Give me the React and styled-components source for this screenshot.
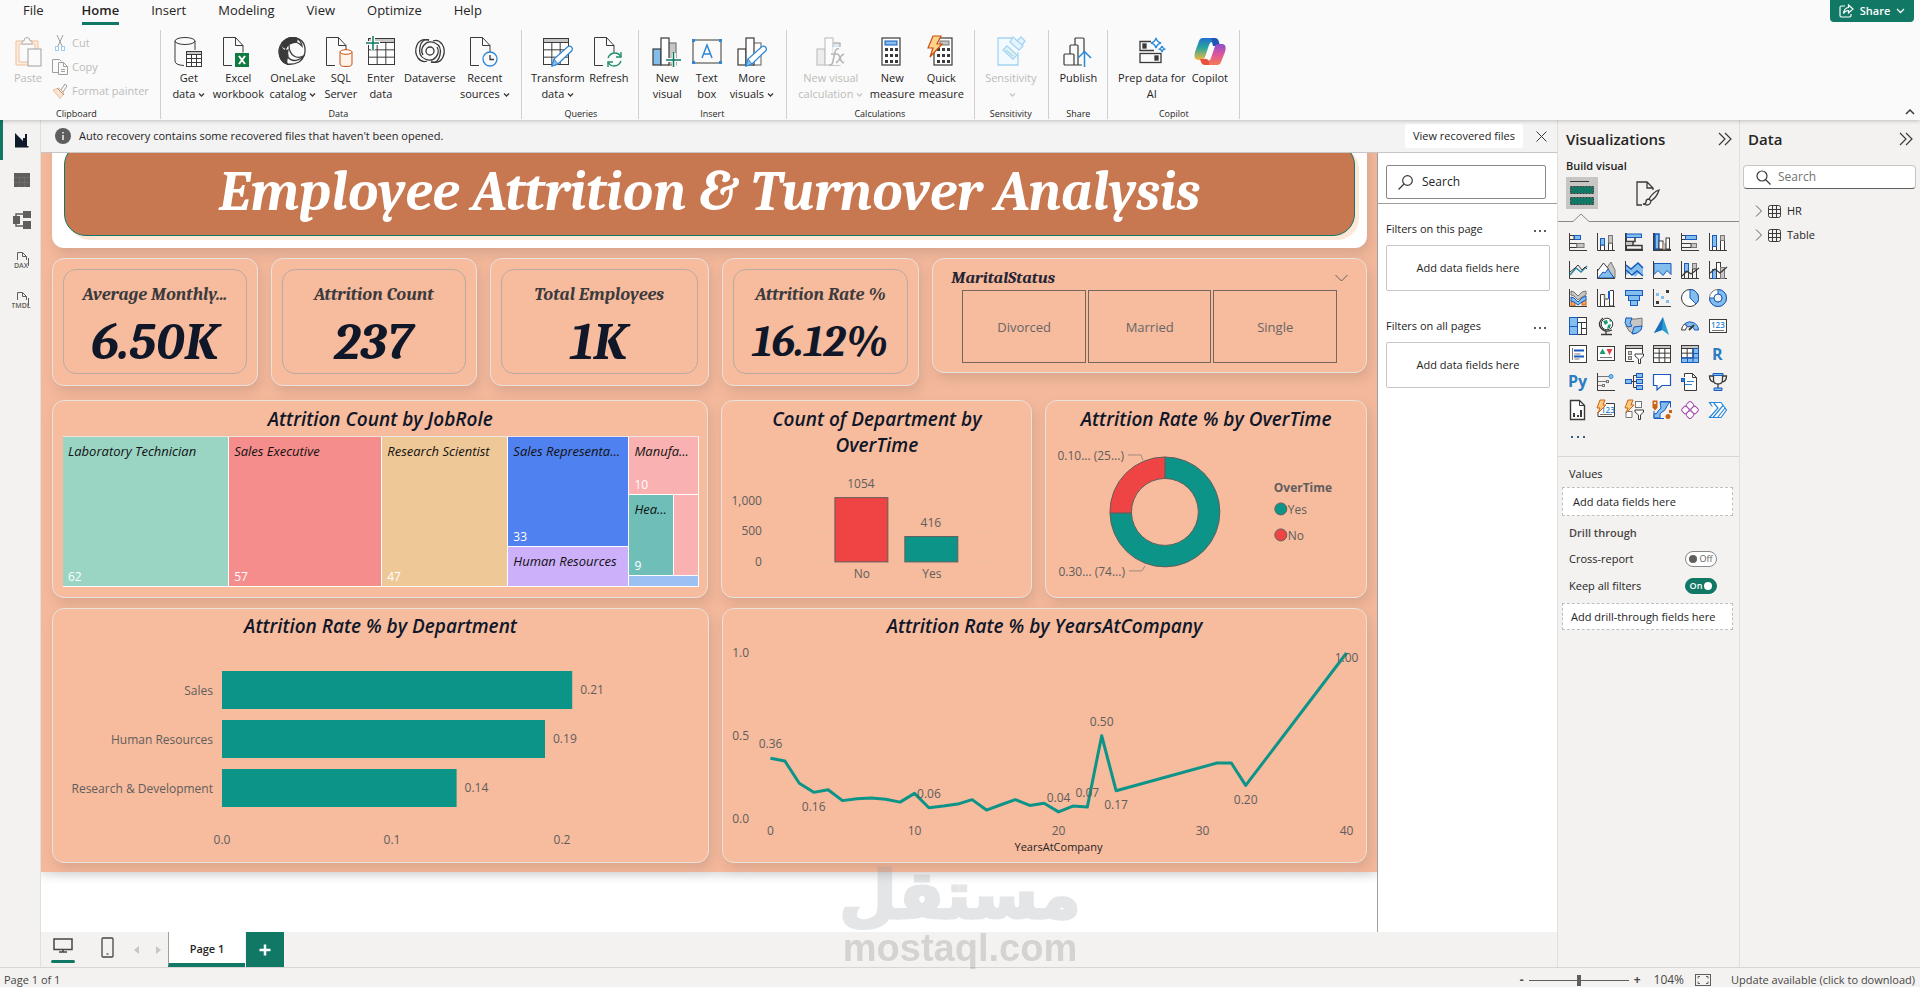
import React, { useState } from 'react';
import styled, { createGlobalStyle } from 'styled-components';

const GlobalStyle = createGlobalStyle`
  * { box-sizing: border-box; }
  body {
    margin: 0;
    background: #f3f2f1;
    color: #252423;
    font-family: "Segoe UI", "Open Sans", "Noto Sans", sans-serif;
    font-size: 11px;
    line-height: 16px;
  }
  button, input { font: inherit; color: inherit; }
  button { background: none; border: 0; padding: 0; cursor: pointer; }
  svg { display: block; flex: none; }
`;

const K = '#3b3a39';
const B = '#185abd';
const F = '#83beec';
const G = '#c8c6c4';
const S = '#797775';
const GREEN = '#117865';
const TEAL = '#0d9488';
const serif = '"Cambria", "Caladea", "Noto Serif", serif';

/* ---------- shell ---------- */

const Shell = styled.div`
  display: flex;
  flex-direction: column;
  height: 100vh;
  overflow: hidden;
`;

const Ribbon = styled.header`
  position: relative;
  z-index: 2;
  flex: none;
  background: #fafafa;
  box-shadow: 0 1px 4px rgba(0, 0, 0, 0.22);
`;

const TabBar = styled.nav`
  display: flex;
  align-items: flex-start;
  gap: 32px;
  height: 26px;
  padding-left: 23px;
`;

const Tab = styled.button`
  height: 25px;
  padding-bottom: 5px;
  margin-right: ${props => props.$wide ? '6px' : '0'};
  border-bottom: 3px solid ${props => props.$active ? GREEN : 'transparent'};
  font-size: 13px;
  font-weight: ${props => props.$active ? 600 : 400};
  line-height: 20px;
`;

const ShareButton = styled.button`
  display: flex;
  align-items: center;
  justify-content: center;
  gap: 6px;
  width: 84px;
  height: 22px;
  margin: 0 6px 0 auto;
  border-radius: 0 0 4px 4px;
  background: ${GREEN};
  color: #fff;
  font-size: 11px;
  font-weight: 600;
`;

const Groups = styled.div`
  display: flex;
  padding: 4px 0 1px;
`;

const Group = styled.section`
  display: flex;
  flex-direction: column;
  padding: 0 ${props => props.$right || 6}px 0 ${props => props.$left || 8}px;
  border-right: 1px solid #d2d0ce;
`;

const GroupItems = styled.div`
  display: flex;
  height: 78px;
`;

const GroupLabel = styled.div`
  font-size: 9px;
  line-height: 11px;
  text-align: center;
`;

const RibbonItem = styled.button`
  display: flex;
  flex-direction: column;
  align-items: center;
  gap: 3px;
  width: ${props => props.$width}px;
  padding-top: 7px;
  white-space: nowrap;
  color: ${props => props.disabled ? '#bdbbb9' : '#252423'};
  svg.caret { display: inline-block; margin-left: 3px; }
`;

const ClipColumn = styled.div`
  display: flex;
  flex-direction: column;
  padding-top: 1px;
`;

const ClipItem = styled.button`
  display: flex;
  align-items: center;
  gap: 4px;
  height: 24px;
  color: #bdbbb9;
`;

const Collapse = styled.button`
  margin: auto 5px 4px auto;
`;

const Body = styled.div`
  display: flex;
  flex: 1;
  min-height: 0;
`;

const Rail = styled.nav`
  display: flex;
  flex-direction: column;
  width: 41px;
  flex: none;
  border-right: 1px solid #e1dfdd;
`;

const RailButton = styled.button`
  display: flex;
  align-items: center;
  justify-content: center;
  height: 40px;
  border-left: 3px solid ${props => props.$active ? GREEN : 'transparent'};
`;

const Center = styled.main`
  display: flex;
  flex-direction: column;
  flex: 1;
  min-width: 0;
`;

const Notice = styled.div`
  display: flex;
  align-items: center;
  height: 33px;
  flex: none;
  padding: 0 5px 0 14px;
  gap: 8px;
  border-bottom: 1px solid #c8c6c4;
  background: #f3f3f3;
`;

const NoticeAction = styled.button`
  height: 24px;
  margin-left: auto;
  padding: 0 8px;
  border-radius: 3px;
  background: #fff;
`;

const CloseButton = styled.button`
  padding: 5px;
`;

const Workspace = styled.div`
  display: flex;
  flex: 1;
  min-height: 0;
  background: #fff;
`;

const Canvas = styled.div`
  flex: 1;
  min-width: 0;
  overflow: hidden;
`;

/* ---------- report page ---------- */

// the page is scrolled, so its top edge lies above the viewport
const ReportPage = styled.div`
  margin-top: -20px;
  padding: 0 10px 9px 11px;
  background: #f4b99c;
  box-shadow: 0 3px 10px rgba(0, 0, 0, 0.16);
`;

const TitleCard = styled.div`
  padding: 10px 12px 12px;
  border-radius: 12px;
  background: #fff;
  box-shadow: 3px 6px 12px rgba(120, 90, 80, 0.22);
`;

const ReportTitle = styled.h1`
  height: 93px;
  margin: 0;
  border: 1px solid ${GREEN};
  border-radius: 22px;
  background: #c87850;
  box-shadow: 4px 4px 1px #fbe8d6;
  color: #fff;
  font: italic 700 56px/96px ${serif};
  text-align: center;
`;

const CardRow = styled.div`
  display: grid;
  grid-template-columns: ${props => props.$columns};
  align-items: start;
  gap: 13px;
  margin-top: ${props => props.$top}px;
`;

const Card = styled.section`
  display: flex;
  flex-direction: column;
  height: ${props => props.$height}px;
  padding-top: ${props => props.$pad || 0}px;
  border: 1px solid #e8e2df;
  border-radius: 12px;
  background: #f7bb9e;
  box-shadow: 3px 6px 12px rgba(120, 90, 80, 0.2);
  min-width: 0;
`;

const Kpi = styled.div`
  flex: 1;
  display: flex;
  flex-direction: column;
  align-items: center;
  margin: 10px 10px 11px;
  padding-top: 12px;
  border: 1px solid #b9aba2;
  border-radius: 13px;
  overflow: hidden;
`;

const KpiLabel = styled.div`
  font: italic 700 18px/26px ${serif};
  color: #3b3a3c;
  white-space: nowrap;
`;

const KpiValue = styled.div`
  font: italic 700 ${props => props.$size}px/60px ${serif};
  color: #0f1729;
  margin-top: 4px;
`;

const SlicerHead = styled.div`
  display: flex;
  align-items: center;
  justify-content: space-between;
  padding: 0 18px;
  font: italic 700 17px/24px ${serif};
  color: #252433;
`;

const SlicerTiles = styled.div`
  display: grid;
  grid-template-columns: repeat(3, 1fr);
  gap: 2px;
  margin: 0 29px;
`;

const SlicerTile = styled.button`
  height: 73px;
  border: 1px solid #756660;
  color: #666;
  font-size: 13px;
`;

const ChartTitle = styled.h2`
  margin: 0;
  padding: 0 20px;
  color: #0f1729;
  font-size: 19px;
  font-style: italic;
  font-weight: 600;
  line-height: 26px;
  text-align: center;
`;

const ChartSvg = styled.svg`
  width: 100%;
  font-size: 12px;
  fill: #605e5c;
`;

const TreeMap = styled.div`
  display: grid;
  grid-template-columns: 166fr 153fr 126fr 121fr 70fr;
  height: 151px;
  margin: 4px 8px 0 10px;
  border-top: 1px solid #eee5e0;
`;

const TreeColumn = styled.div`
  display: grid;
  grid-template-rows: ${props => props.$rows || '1fr'};
  min-width: 0;
`;

const TreeSplit = styled.div`
  display: grid;
  grid-template-columns: 45fr 25fr;
`;

const Tile = styled.div`
  display: flex;
  flex-direction: column;
  justify-content: space-between;
  padding: 4px 0 1px 5px;
  border: solid #fff;
  border-width: 0 1px 1px 0;
  background: ${props => props.$color};
  color: #111;
  font-size: 13px;
  font-style: italic;
  line-height: 20px;
  white-space: nowrap;
  overflow: hidden;
`;

const TileCount = styled.span`
  color: #fff;
  font-size: 12px;
  font-style: normal;
  line-height: 16px;
`;

/* ---------- panes ---------- */

const FilterPane = styled.aside`
  width: 180px;
  flex: none;
  border-left: 1px solid #a19f9d;
`;

const FilterSearch = styled.label`
  display: flex;
  align-items: center;
  gap: 9px;
  height: 34px;
  margin: 12px 11px 4px 8px;
  padding: 0 11px;
  border: 1px solid #8a8886;
  border-radius: 2px;
`;

const PlainInput = styled.input`
  flex: 1;
  min-width: 0;
  border: 0;
  padding: 0;
  outline: 0;
  background: none;
  font-size: 12px;
  &::placeholder { color: ${props => props.$ink}; opacity: 1; }
`;

const FilterBlock = styled.section`
  padding: 0 7px 0 8px;
  margin-top: ${props => props.$top}px;
`;

const FilterHead = styled.div`
  display: flex;
  align-items: center;
  justify-content: space-between;
  padding-right: 4px;
  margin-bottom: 8px;
`;

const Dots = styled.button`
  display: flex;
  gap: 3px;
  padding: 6px 0 2px;
  &::before, &::after, & > i { content: ""; width: 2px; height: 2px; background: #605e5c; }
`;

const FilterDrop = styled.div`
  display: flex;
  align-items: center;
  justify-content: center;
  height: 46px;
  border: 1px solid #c8c6c4;
  border-radius: 2px;
`;

const Rule = styled.hr`
  margin: 0;
  border: 0;
  border-top: 1px solid ${props => props.$color || '#d8d6d4'};
`;

const SidePane = styled.aside`
  width: ${props => props.$width}px;
  flex: none;
  border-left: 1px solid #e1dfdd;
`;

const PaneHead = styled.div`
  display: flex;
  align-items: center;
  justify-content: space-between;
  padding: 8px 7px 0 8px;
  h2 { margin: 0; font-size: 15px; font-weight: 600; line-height: 22px; }
`;

const SubHead = styled.h3`
  margin: 8px 0 3px 8px;
  font-size: 11px;
  font-weight: 600;
  line-height: 16px;
`;

const BuildTabs = styled.div`
  display: flex;
  gap: 34px;
  padding-left: 8px;
`;

const BuildTab = styled.button`
  display: flex;
  align-items: center;
  justify-content: center;
  width: 32px;
  height: 32px;
  background: ${props => props.$active ? '#c8c6c4' : 'none'};
`;

const Notch = styled.div`
  display: flex;
  align-items: flex-end;
  margin-top: 4px;
  height: 9px;
  &::before { content: ""; width: 15px; border-top: 1px solid #8a8886; }
  &::after { content: ""; flex: 1; border-top: 1px solid #8a8886; }
`;

const VisualGrid = styled.div`
  display: grid;
  grid-template-columns: repeat(6, 18px);
  grid-auto-rows: 18px;
  gap: 10px;
  padding: 11px 0 11px 11px;
  button { display: flex; }
`;

const MoreVisuals = styled(Dots)`
  gap: 4px;
  margin: 0 0 16px 13px;
  &::before, &::after, & > i { background: #3b5a85; }
`;

const FieldLabel = styled.div`
  margin: 9px 0 5px 11px;
  font-weight: ${props => props.$strong ? 600 : 400};
  color: ${props => props.$strong ? '#484644' : '#252423'};
`;

const FieldDrop = styled.div`
  display: flex;
  align-items: center;
  height: ${props => props.$height}px;
  margin: 0 6px 0 4px;
  padding-left: ${props => props.$indent}px;
  border: 1px dashed #c1bfbd;
  background: #fff;
`;

const Switches = styled.div`
  margin: -1px 0 4px;
`;

const SwitchRow = styled.div`
  display: flex;
  align-items: center;
  justify-content: space-between;
  height: 27px;
  padding: 0 22px 0 11px;
`;

const Switch = styled.button`
  display: flex;
  flex-direction: ${props => props.$on ? 'row-reverse' : 'row'};
  align-items: center;
  justify-content: center;
  gap: 2px;
  width: 32px;
  height: 16px;
  border: 1px solid ${props => props.$on ? GREEN : '#8a8886'};
  border-radius: 8px;
  background: ${props => props.$on ? GREEN : '#fff'};
  color: ${props => props.$on ? '#fff' : '#605e5c'};
  font-size: 9px;
  font-weight: ${props => props.$on ? 600 : 400};
  &::before {
    content: "";
    width: 8px;
    height: 8px;
    border-radius: 50%;
    background: ${props => props.$on ? '#fff' : '#605e5c'};
  }
`;

const DataSearch = styled.label`
  display: flex;
  align-items: center;
  gap: 7px;
  height: 24px;
  margin: 15px 4px 10px 3px;
  padding: 0 12px;
  border: 1px solid #c8c6c4;
  border-bottom-color: #605e5c;
  border-radius: 4px;
  background: #fff;
`;

const TreeRow = styled.button`
  display: flex;
  align-items: center;
  gap: 6px;
  width: 100%;
  height: 24px;
  padding-left: 15px;
`;

/* ---------- footer ---------- */

const PageTabs = styled.div`
  display: flex;
  height: 35px;
  flex: none;
`;

const ViewButton = styled.button`
  display: flex;
  flex-direction: column;
  align-items: center;
  justify-content: space-between;
  width: 24px;
  margin-left: ${props => props.$left}px;
  padding: 5px 0 4px;
  &::after {
    content: "";
    width: 100%;
    height: 3px;
    border-radius: 2px;
    background: ${props => props.$active ? GREEN : 'transparent'};
  }
`;

const Arrows = styled.div`
  display: flex;
  align-items: center;
  gap: 17px;
  margin: 0 7px 0 15px;
`;

const PageTab = styled.button`
  width: 77px;
  padding-top: 3px;
  border-left: 1px solid #a19f9d;
  border-bottom: 4px solid ${GREEN};
  background: #fff;
  font-size: 11px;
  font-weight: 600;
`;

const AddPage = styled.button`
  display: flex;
  align-items: center;
  justify-content: center;
  width: 38px;
  margin-left: 1px;
  background: ${GREEN};
`;

const StatusBar = styled.footer`
  display: flex;
  align-items: center;
  height: 20px;
  flex: none;
  padding: 5px 5px 0 4px;
  border-top: 1px solid #d8d6d4;
  color: #484644;
`;

const ZoomTools = styled.div`
  display: flex;
  align-items: center;
  gap: 5px;
  margin-left: auto;
  font-size: 12px;
`;

const ZoomStep = styled.button`
  font-weight: 700;
`;

const ZoomRange = styled.input`
  appearance: none;
  width: 100px;
  height: 12px;
  margin: 0;
  background: linear-gradient(#605e5c, #605e5c) center / 100% 1px no-repeat;
  &::-webkit-slider-thumb {
    appearance: none;
    width: 4px;
    height: 11px;
    background: #605e5c;
  }
`;

const ZoomValue = styled.span`
  margin: 0 6px 0 8px;
`;

const Update = styled.a`
  margin-left: 20px;
  color: #484644;
  text-decoration: none;
`;

const Watermark = styled.div`
  position: fixed;
  z-index: 3;
  left: 50%;
  bottom: 18px;
  transform: translateX(-50%);
  display: flex;
  flex-direction: column;
  align-items: center;
  color: #8f979f;
  opacity: 0.25;
  pointer-events: none;
  font: 700 66px/62px "DejaVu Sans", sans-serif;
  -webkit-text-stroke: 3px #8f979f;
  span {
    font: 700 38px/42px "Liberation Sans", sans-serif;
    color: #777;
    -webkit-text-stroke: 0;
  }
`;

/* ---------- ribbon icons ---------- */

const Doc = ({ w = 20 }) => (
  <g stroke={K}>
    <path d={`M${w - 11} 28.5H.5V.5h12l${w - 12.5} 8v7`} fill="none" />
    <path d={`M12.5 .5v8h${w - 12.5}`} />
  </g>
);

const Grid = ({ x, y, w, h, head = 4, c = K }) => (
  <g stroke={c}>
    <rect x={x} y={y} width={w} height={h} fill="#fff" />
    <rect x={x} y={y} width={w} height={head} fill={G} />
    <path d={`M${x} ${y + head + (h - head) / 3}h${w}M${x} ${y + head + (h - head) * 2 / 3}h${w}M${x + w / 3} ${y + head}v${h - head}M${x + w * 2 / 3} ${y + head}v${h - head}`} />
  </g>
);

const Pencil = () => (
  <g>
    <path d="M9 29l2-7L25 9.500q2-1 3.500 .5t.5 3.500L15 27z" fill="#fff" stroke="#2b88d8" strokeWidth="1.300" />
    <path d="M9 29l2-7 4 5z" fill={F} stroke="#2b88d8" />
  </g>
);

const Bars = ({ a = '#fff', c = '#fff', line = K }) => (
  <g stroke={line} strokeWidth="1.200">
    <rect x="1" y="12" width="8" height="16" fill={a} />
    <rect x="16" y="6" width="8" height="22" fill={c} stroke={S} />
    <rect x="9" y="1" width="8" height="27" fill="#fff" />
  </g>
);

const Calc = ({ x = 4 }) => (
  <g>
    <rect x={x} y="1" width="18" height="27" fill="#fff" stroke={K} strokeWidth="1.200" />
    {[11, 17, 23].map(y => [3, 8, 13].map(d => <rect key={d + '-' + y} x={x + d} y={y} width="3" height="3" fill={K} />))}
  </g>
);

const ribbonIcons = {
  paste: <g stroke="#efc09c">
    <path d="M3 4h22v24H3z" fill="#fdeedf" />
    <path d="M6 7h16v18H6z" fill="#fafafa" />
    <path d="M9 7V4h2q0-3.500 3-3.500T17 4h2v3z" fill="#fafafa" stroke="#b3b0ad" />
    <rect x="15" y="12" width="13" height="17" fill="#fafafa" stroke="#a19f9d" />
  </g>,
  getData: <g>
    <path d="M1 4v20q0 4 9 4.500M21 4v9" stroke={K} />
    <ellipse cx="11" cy="4" rx="10" ry="3.500" stroke={K} />
    <Grid x={12.5} y={14.5} w={15} h={15} head={3} />
  </g>,
  excel: <g><Doc /><rect x="12" y="16" width="14" height="14" fill="#107c41" /><path d="M16 19l6 8M22 19l-6 8" stroke="#fff" strokeWidth="2" /></g>,
  onelake: <g stroke={K} strokeWidth="1.300">
    <path d="M18 1Q9-1 4 6t-2 14q2 5 7 7Q5 19 8 11q2-5 10-6 3 1 6 4-1-6-6-8z" fill="#fafafa" />
    <path d="M4 6Q10-1 18 1q2 2 0 4-8 0-11 6-3-1-3-5zM3 9q2 6 7 4-1 3 0 6-2 5-1 8-6-2-7-8-1-5 1-10z" fill={K} />
    <path d="M11 8q0 8 5 11t11-1M18 1q8 2 9 10 1 9-6 14-6 3-12 2M10 20q5 7 15 0" />
  </g>,
  sql: <g><Doc /><g stroke="#ca5010" fill="#fff"><path d="M14 15v12q0 2.500 6 2.500t6-2.500V15" fill="#fdf3ea" /><ellipse cx="20" cy="15" rx="6" ry="2.300" /></g></g>,
  enter: <g><Grid x={2.5} y={1.5} w={26} h={26} head={4} /><path d="M0 6h14M7 -1v14" stroke="#fafafa" strokeWidth="4" /><path d="M0 6h13M7 -1v14" stroke={GREEN} strokeWidth="1.500" /></g>,
  dataverse: <g stroke={K} strokeWidth="1.300">
    <circle cx="15" cy="14" r="4" />
    <path d="M8 18q-3-5 1-10t11-2 5 12-9 7M22 10q3 5-1 10t-11 2-5-12 9-7" />
    <path d="M14 3Q5 1 2 8t1 13q4 5 9 3M16 25q9 2 12-5t-1-13q-4-5-9-3" />
  </g>,
  recent: <g><Doc /><circle cx="20" cy="22" r="7" stroke="#2b88d8" strokeWidth="1.300" fill="#fafafa" /><path d="M20 18v4.500h4" stroke={K} strokeWidth="1.300" /></g>,
  transform: <g><Grid x={.5} y={1.5} w={25} h={26} head={4} /><Pencil /></g>,
  refresh: <g><Doc /><g stroke="#218d6b" strokeWidth="1.400"><path d="M14 21q2-5 7-5 4 0 6 4M27 24q-2 5-7 5-4 0-6-4" /><path d="M27 15v5h-5M14 30v-5h5" /></g></g>,
  newVisual: <g><Bars a={F} c={G} /><path d="M15 23h14M22 16v14" stroke="#fafafa" strokeWidth="4" /><path d="M14 23h15M21.500 15v15" stroke={GREEN} strokeWidth="1.500" /></g>,
  textBox: <g><rect x="1" y="3" width="28" height="23" stroke={K} /><path d="M10 21l5-13 5 13M12 17h6" stroke="#2b88d8" strokeWidth="1.500" />{[[0, 2], [27, 2], [0, 24], [27, 24]].map(([x, y]) => <rect key={x + '-' + y} x={x} y={y} width="3" height="3" fill="#2b88d8" />)}</g>,
  moreVisuals: <g><Bars /><Pencil /></g>,
  visualCalc: <g opacity=".6"><Bars a="#e6e6e6" c="#c7e0f4" line="#a19f9d" /><path d="M17 10h12v18H15z" fill="#fafafa" /><path d="M13 28q3 1 4-4l2-9q1-4 4-3M15 17h6M21 17q2 0 3 4t4 5M28 17q-3 1-4 4t-4 5" stroke="#8a8886" strokeWidth="1.500" /></g>,
  newMeasure: <g><Calc x={5} /><rect x="8" y="4" width="12" height="4" fill={F} stroke={B} /></g>,
  quickMeasure: <g><Calc x={8} /><rect x="14" y="4" width="9" height="4" fill={G} stroke={S} /><path d="M7 -1h8l-4 8h5L4 20l3-9H2z" fill="#fbd38b" stroke="#ca5010" strokeWidth="1.200" /></g>,
  sensitivity: <g stroke="#a6d4f2" strokeWidth="1.300">
    <path d="M16 1H2v27h20V15" fill="#f3faff" />
    <path d="M7 13l4-4 10 9-4 4z" fill="#e3f3ee" /><path d="M10 13l7 6" />
    <path d="M14 5l3-5 10 9-4 4zM21 4l4-4 4 4-3 4" fill="#e6f4fd" />
  </g>,
  publish: <g stroke={K} strokeWidth="1.200"><rect x="1" y="17" width="10" height="11" rx="1" /><path d="M7 17V9q0-1 1-1h6q1 0 1 1v19H11M12 8V2q0-1 1-1h7q1 0 1 1v13M15 28h4" /><path d="M21.500 30V15M15 21l6.500-6.500L28 21" stroke="#2b88d8" strokeWidth="1.500" /></g>,
  prep: <g stroke={K} strokeWidth="1.300"><path d="M14 4.500H3v9h14" /><rect x="3" y="16.500" width="21" height="9" /><rect x="6" y="7" width="3" height="4" fill={K} /><rect x="18" y="19" width="3" height="4" fill={K} /><path d="M19 1q1 4 5 5-4 1-5 5-1-4-5-5 4-1 5-5zM25 9q.5 2 2.500 3-2 .5-2.500 3-.5-2.500-2.500-3 2-1 2.500-3z" stroke="#2b88d8" fill="#fafafa" /></g>,
  copilot: <g>
    <defs>
      <linearGradient id="cpA" x1="0" y1="0" x2="0" y2="1"><stop offset="0" stopColor="#1f6fd0" /><stop offset=".45" stopColor="#2aa59a" /><stop offset="1" stopColor="#f5b83d" /></linearGradient>
      <linearGradient id="cpB" x1="0" y1="0" x2="0" y2="1"><stop offset="0" stopColor="#8a4fd0" /><stop offset=".5" stopColor="#e0569a" /><stop offset="1" stopColor="#f47c51" /></linearGradient>
    </defs>
    <path d="M8 1h10q3 0 2 4h-3q-2 0-3 3l-4 12q-1 3-4 3H3q-5-1-3-8L4 4q1-3 4-3z" fill="url(#cpA)" />
    <path d="M16 1h4q3 0 4 4l1 4h-7l-1-4q-.5-4-1-4z" fill="#1f56b5" />
    <path d="M22 28H12q-3 0-2-4h3q2 0 3-3l4-12q1-2 4-2h4q4 1 2 8l-4 10q-1 3-4 3z" fill="url(#cpB)" />
    <path d="M14 28h-4q-3 0-4-3l-1-3h7l2 2z" fill="#e8513c" />
  </g>,
};

const RibbonIcon = ({ name }) => (
  <svg width="30" height="30" viewBox="0 0 30 30" fill="none" overflow="visible">{ribbonIcons[name]}</svg>
);

const Caret = ({ color = K }) => (
  <svg className="caret" width="7" height="6" viewBox="0 0 7 6" fill="none"><path d="M1 1.500l2.500 2.500L6 1.500" stroke={color} strokeWidth="1.300" /></svg>
);

const ribbonGroups = [
  { label: 'Data', left: 4, right: 9, items: [
    ['getData', 'Get', 'data', 48, true],
    ['excel', 'Excel', 'workbook', 51],
    ['onelake', 'OneLake', 'catalog', 58, true],
    ['sql', 'SQL', 'Server', 38],
    ['enter', 'Enter', 'data', 42],
    ['dataverse', 'Dataverse', '', 56],
    ['recent', 'Recent', 'sources', 54, true],
  ] },
  { label: 'Queries', left: 8, right: 6, items: [['transform', 'Transform', 'data', 56, true], ['refresh', 'Refresh', '', 46]] },
  { label: 'Insert', left: 8, right: 8, items: [['newVisual', 'New', 'visual', 41], ['textBox', 'Text', 'box', 38], ['moreVisuals', 'More', 'visuals', 52, true]] },
  { label: 'Calculations', left: 7, right: 8, items: [['visualCalc', 'New visual', 'calculation', 74, true, true], ['newMeasure', 'New', 'measure', 49], ['quickMeasure', 'Quick', 'measure', 49]] },
  { label: 'Sensitivity', left: 6, right: 7, items: [['sensitivity', 'Sensitivity', '', 60, true, true]] },
  { label: 'Share', left: 5, right: 4, items: [['publish', 'Publish', '', 49]] },
  { label: 'Copilot', left: 8, right: 7, items: [['prep', 'Prep data for', 'AI', 72], ['copilot', 'Copilot', '', 44]] },
];

/* ---------- visual gallery icons ---------- */

const axis = <path d="M.5 0v17.500H18" stroke={K} />;
const bolt = <path d="M3-1h5L6 4h3L1 12l2-5H0z" fill="#fbc97f" stroke="#c86414" />;
const filter = <path d="M10 9h8.500v2L15.500 14v4.500h-2V14L10 11z" fill="#fff" stroke={K} />;

const visuals = {
  'Stacked bar': <>{axis}<path d="M1 2.500h4v4H1M1 10.500h7v4H1" stroke={K} /><rect x="5.500" y="2.500" width="6" height="4" fill={F} stroke={B} /><rect x="8" y="10.500" width="7" height="4" fill={G} stroke={S} /></>,
  'Stacked column': <>{axis}<path d="M3.500 17v-5h4v5M11.500 17v-7h4v7" stroke={K} fill="#fff" /><rect x="3.500" y="5.500" width="4" height="6.500" fill={F} stroke={B} /><rect x="11.500" y="2.500" width="4" height="7.500" fill={G} stroke={S} /></>,
  'Clustered bar': <><path d="M1 0v17h17" stroke={K} strokeWidth="2" /><rect x="1.500" y="1" width="15" height="3.500" fill={F} stroke={B} /><path d="M1 8.500h9v-4M1 12.500h16v4H1M8 8.500v4" stroke={K} strokeWidth="1.500" /><rect x="1" y="9" width="6" height="3" fill={G} /></>,
  'Clustered column': <><path d="M1 0v17h17" stroke={K} strokeWidth="2" /><rect x="2" y="1" width="4" height="15" fill={F} stroke={B} strokeWidth="1.500" /><rect x="6" y="8" width="4" height="8" fill="#fff" stroke={K} /><rect x="10" y="11" width="3" height="5" fill={G} stroke="#b98" /><rect x="13" y="5" width="3.500" height="11" fill="#fff" stroke={K} /></>,
  '100% bar': <>{axis}<path d="M1 2.500h4v4H1M1 10.500h9v4H1" stroke={K} /><rect x="4.500" y="2.500" width="11" height="4" fill={F} stroke={B} /><rect x="10.500" y="10.500" width="5" height="4" fill={G} stroke={S} /></>,
  '100% column': <>{axis}<path d="M3.500 17v-4h4v4M11.500 17V7.500h4V17" stroke={K} fill="#fff" /><rect x="3.500" y="2.500" width="4" height="11" fill={F} stroke={B} /><rect x="11.500" y="2.500" width="4" height="5" fill={G} stroke={S} /></>,
  'Line': <>{axis}<path d="M1 14l6-7 5 4 6-6" stroke="#2b88a8" strokeWidth="1.500" /><path d="M1 11l5-4 3-3 4 5 3-3 2 2" stroke={K} /></>,
  'Area': <><path d="M9 8l5-7 4 8v8z" fill={G} stroke={S} /><path d="M.5 10l6-8 5 6-6 9-5 0z" fill="#fff" stroke={K} /><path d="M1 17l5-6 2 1 3-4 6 9z" fill={F} stroke={B} /><path d="M.5 8v9.500H18" stroke={K} /></>,
  'Stacked area': <><path d="M1 4l5 4 7-6 5 4v9l-4-3-4 4-4-5-5 3z" fill={F} /><path d="M1 4l5 4 7-6 5 5M1 9l6 5 5-4 6 5" stroke={B} strokeWidth="1.500" />{axis}</>,
  '100% area': <><path d="M1 2.500h17v11l-4-4-4 5-5-5-4 4z" fill={F} stroke={B} />{axis}</>,
  'Line and stacked column': <>{axis}<rect x="3.500" y="2.500" width="4" height="8" fill={F} stroke={B} /><path d="M3.500 17v-6h4v6M11.500 17V8h4v9" stroke={K} /><rect x="11.500" y="2.500" width="4" height="5" fill={G} stroke={S} /><path d="M1 15l5-5 4 3 8-6" stroke={K} strokeWidth="1.300" /></>,
  'Line and clustered column': <>{axis}<rect x="3.500" y="8.500" width="4" height="9" fill={F} stroke={B} /><rect x="7.500" y="1.500" width="4" height="16" fill="#fff" stroke={K} /><rect x="11.500" y="6.500" width="4" height="11" fill={G} stroke={S} /><path d="M1 12l5-4 5 4 7-6" stroke={K} strokeWidth="1.300" /></>,
  'Ribbon': <><path d="M2 2l3 1 4 4 4-4 4-1v4l-4 2-4 3-4-4-3-1z" fill={G} stroke={S} /><rect x="2" y="12" width="4" height="5" fill="#f2a35e" stroke="#c86414" /><rect x="13" y="11" width="4" height="5" fill="#f2a35e" stroke="#c86414" /><path d="M2 8l3 1 4 4 4-4 4-2v4l-4 2-4 3-4-3-3-1z" fill={F} stroke={B} />{axis}</>,
  'Waterfall': <>{axis}<path d="M3.500 17V5.500h4V17M13 1.500h3.500V17h-4V8" stroke={K} fill="#fff" /><path d="M7.500 5.500V10H11" stroke={S} strokeWidth="1.500" /><rect x="11" y="2" width="2" height="8" fill={B} /></>,
  'Funnel': <g fill={F} stroke={B}><rect x=".5" y="1.500" width="17" height="5" /><rect x="3.500" y="6.500" width="11" height="5" /><rect x="5.500" y="11.500" width="7" height="5" /></g>,
  'Scatter': <>{axis}<rect x="13" y="1" width="3" height="3" fill={K} /><rect x="3" y="4" width="3" height="3" fill={F} /><rect x="8" y="7" width="3" height="3" fill={F} /><rect x="13" y="11" width="3" height="3" fill={F} /><rect x="3" y="12" width="3" height="3" fill={K} /></>,
  'Pie': <><circle cx="9" cy="9" r="8.500" fill="#fff" stroke={K} /><path d="M9 .5a8.500 8.500 0 0 1 6 14.500L9 9z" fill={F} stroke={B} /></>,
  'Donut': <><circle cx="9" cy="9" r="8.500" fill="#fff" stroke={S} /><path d="M9 .5a8.500 8.500 0 1 1-8.500 8.500H5A4 4 0 1 0 9 5z" fill={F} stroke={B} /><circle cx="9" cy="9" r="4" fill="#f3f2f1" stroke={B} /></>,
  'Treemap': <><rect x=".5" y=".5" width="17" height="17" fill="#fff" stroke={K} /><path d="M.5 .5h8v17h-8z" fill={F} stroke={B} /><path d="M.5 9.500h8" stroke={B} /><path d="M8.500 5.500h9M12.500 5.500v12M12.500 11.500h5" stroke={K} /></>,
  'Map': <><path d="M6 1Q0 6 4 11t11 2M9 14.500v3M4 17.500h11" stroke={K} strokeWidth="1.300" /><circle cx="10" cy="7" r="5.800" fill="#fff" stroke={K} /><path d="M6 4l4-1 1 3-3 2zM11 8l3-1-1 4-3 1zM12 2l3 2-2 1z" fill="#1f9a70" /></>,
  'Filled map': <><path d="M1 1l6 1 4 0 6-1v8l-3 5-5 3-5-3-3-5z" fill={G} stroke={S} /><path d="M1 1h6l-2 5 2 3-4 1-3-4z" fill={F} stroke={B} /><path d="M9 10l8-1-1 4-4 3-5 1z" fill={F} stroke={B} /></>,
  'Azure map': <><path d="M10 0l6 18-7-5-8 3z" fill="#2b9fd0" /><path d="M10 0L9 13l-8 3z" fill="#1b6fbd" /></>,
  'Gauge': <><path d="M.5 13a8.500 8.500 0 0 1 3-6l3 3q-2 1-2 3z" fill="#fff" stroke={K} /><path d="M4 6.500a8.500 8.500 0 0 1 13.500 6.500h-4a4.500 4.500 0 0 0-6.500-3z" fill={F} stroke={B} /><path d="M8 13l5-5" stroke={K} strokeWidth="2" /></>,
  'Card': <><rect x=".5" y="2.500" width="17" height="13" fill="#fff" stroke={K} /><text x="2" y="11" fontSize="8" fontWeight="600" fill="#2b88d8">123</text><path d="M3 13.500h12" stroke={S} /></>,
  'Multi-row card': <><rect x=".5" y=".5" width="17" height="17" fill="#fff" stroke={K} /><path d="M3.500 3v12M5.500 9h6M5.500 14h5" stroke={S} /><path d="M5 5.500h10M5 11.500h10" stroke={B} strokeWidth="2" /></>,
  'KPI': <><rect x=".5" y="1.500" width="17" height="14" fill="#fff" stroke={K} /><path d="M2.500 9l3-5.500 3 5.500z" fill="#1f9a70" /><path d="M9.500 4h6l-3 6z" fill="#e8404a" /><path d="M3 12.500h12" stroke={S} /></>,
  'Slicer': <><path d="M9 16.500H.5V.5h17v8" fill="#fff" stroke={K} /><rect x=".5" y=".5" width="17" height="3" fill={G} stroke={K} /><rect x="3.500" y="6.500" width="3" height="3" fill={G} stroke={S} /><rect x="3.500" y="11.500" width="3" height="3" fill={G} stroke={S} />{filter}</>,
  'Table': <Grid x={.5} y={.5} w={17} h={17} head={3} />,
  'Matrix': <><Grid x={.5} y={.5} w={17} h={17} head={3} /><path d="M12.500 3.500h5v14h-17v-4.500h12z" fill={F} stroke={B} /><path d="M.5 13h17M12 3.500v14M6.500 13v4.500M12 8.500h5.500" stroke={B} /></>,
  'R script': <text x="3" y="15" fontSize="16" fontWeight="700" fill="#2b7cc0">R</text>,
  'Python': <text x="-1" y="14" fontSize="16" fontWeight="700" fill="#2b7cc0">Py</text>,
  'Key influencers': <>{axis}<path d="M1 3.500h11M1 8.500h8M1 12.500h4" stroke={S} /><circle cx="14" cy="3.500" r="2" fill={F} stroke="#2b88d8" /><rect x="9.500" y="7.500" width="2" height="2" stroke={S} /><rect x="5.500" y="11.500" width="2" height="2" stroke={S} /></>,
  'Decomposition tree': <><path d="M6 8.500h6M8.500 2.500v12M8.500 2.500h3M8.500 14.500h3" stroke={K} /><g fill={F} stroke={B}><rect x=".5" y="6.500" width="6" height="4" /><rect x="11.500" y=".5" width="6" height="4" /><rect x="11.500" y="6.500" width="6" height="4" /><rect x="11.500" y="12.500" width="6" height="4" /></g></>,
  'Q&A': <path d="M.5 1.500h17v11H9l-5 4.500v-4.500H.5z" fill="#fff" stroke={B} strokeWidth="1.200" />,
  'Narrative': <><path d="M3.500 4V.5h8l4 4v13h-12V9M11.500 .5v4h4" stroke={K} fill="#fff" /><rect x=".5" y="5.500" width="3" height="3" fill="#2b88d8" stroke={B} /><path d="M6 8.500h7M4 11.500h7" stroke="#2b88d8" /></>,
  'Goals': <><path d="M4 3H.5q0 6 5 6M14 3h3.500q0 6-5 6M4.500 1v6q0 4 4.500 4t4.500-4V1M9 11v4" stroke={K} strokeWidth="1.300" /><path d="M4 .5h10v2H4zM5 15h8v2.500H5z" fill={F} stroke={B} /></>,
  'Paginated report': <><path d="M1.500-.5h9l5 5v14h-14z" fill="#fff" stroke={K} strokeWidth="1.400" /><path d="M10.500-.5v5h5" stroke={K} /><path d="M4 12h2v4H4zM8 14h2v2H8zM11 9h2v7h-2z" fill={K} /></>,
  'New card': <><path d="M9 2.500h8.500v13H1V11" fill="#fff" stroke={K} /><text x="4" y="12" fontSize="8" fontWeight="600" fill="#2b88d8">123</text><path d="M3 13.500h12" stroke={S} />{bolt}</>,
  'Button slicer': <><rect x="10.500" y=".5" width="6" height="6" fill="#fff" stroke={S} /><path d="M1 10.500h6v6H1z" fill="#fff" stroke={S} />{bolt}{filter}</>,
  'ArcGIS': <><path d="M7 .5h10.500v6M1 10v7.500h10" stroke={B} /><path d="M7 1h10q-3 3-4 6t-4 4-2 6H1v-4q4 0 4-3l3-3z" fill={F} stroke={B} /><path d="M-.5-.5h5v7l-2.500 3-2.500-3z" fill="#c86414" /><circle cx="2" cy="2" r="1" fill="#fff" /><circle cx="15" cy="15.500" r="2.500" fill="#c86414" /><rect x="16" y="9" width="3" height="3" fill="#c86414" /></>,
  'Power Apps': <g stroke="#a449b0" fill="#fff" transform="rotate(45 9 9)"><rect x="2.500" y="2.500" width="6.500" height="6.500" rx="2" /><rect x="9" y="2.500" width="6.500" height="6.500" rx="2" /><rect x="2.500" y="9" width="6.500" height="6.500" rx="2" /><rect x="9" y="9" width="6.500" height="6.500" rx="2" /></g>,
  'Power Automate': <g stroke="#2b88d8" fill="#fff" strokeWidth="1.200"><path d="M.5 1.500H12l5.500 7.500L12 16.500H.5L6 9z" /><path d="M.5 16.500L9 7 4.500 1.500M4 16.500L14 4.500M8.500 16.500L16 7" /></g>,
};

/* ---------- charts ---------- */

const tenure = [
  [0, .364], [1, .347], [2, .213], [3, .158], [4, .174], [5, .108], [6, .12], [7, .124], [8, .116], [9, .099], [10, .152],
  [11, .065], [12, .075], [13, .087], [14, .114], [15, .051], [16, .083], [17, .114], [18, .079], [19, .092], [20, .04],
  [21, .075], [22, .069], [23, .5], [24, .168], [31, .335], [32, .335], [33, .2], [40, 1],
];

const tenureLabels = [
  [0, '0.36', 109], [3, '0.16', 172], [11, '0.06', 159], [20, '0.04', 163], [22, '0.07', 158],
  [23, '0.50', 87], [24, '0.17', 170], [33, '0.20', 165], [40, '1.00', 23],
];

const departments = [['Sales', .206, '0.21'], ['Human Resources', .19, '0.19'], ['Research & Development', .138, '0.14']];

const dotted = { stroke: '#d5c3b8', strokeDasharray: '1 4' };

const OvertimeBars = () => {
  const y = v => 104 - v * 0.061;
  return (
    <ChartSvg viewBox="0 0 309 139">
      {[[1000, '1,000'], [500, '500'], [0, '0']].map(([v, t]) => (
        <g key={t}><text x="40" y={y(v) + 4} textAnchor="end">{t}</text><line x1="49" x2="297" y1={y(v)} y2={y(v)} {...dotted} /></g>
      ))}
      {[['No', 1054, '#ef4444', 113], ['Yes', 416, TEAL, 183]].map(([t, v, c, x]) => (
        <g key={t} textAnchor="middle">
          <rect x={x} y={y(v)} width="53" height={104 - y(v)} fill={c} stroke="#605e5c" />
          <text x={x + 26} y={y(v) - 10}>{v}</text>
          <text x={x + 27} y="120">{t}</text>
        </g>
      ))}
    </ChartSvg>
  );
};

const OvertimeDonut = () => (
  <ChartSvg viewBox="0 0 320 165">
    <g stroke="#605e5c">
      <path d="M119 25A55 55 0 1 1 64 81H85.500A33.500 33.500 0 1 0 119 46.500z" fill={TEAL} />
      <path d="M64 81A55 55 0 0 1 119 25V46.500A33.500 33.500 0 0 0 85.500 81z" fill="#ef4444" />
      <path d="M82 23h13l2 5M83 139h13l3-5" fill="none" stroke="#a08a80" />
      <circle cx="235" cy="77" r="6" fill={TEAL} />
      <circle cx="235" cy="103" r="6" fill="#ef4444" />
    </g>
    <text x="78" y="28" textAnchor="end">0.10... (25...)</text>
    <text x="79" y="144" textAnchor="end">0.30... (74...)</text>
    <text x="228" y="60" fontWeight="700">OverTime</text>
    <text x="242" y="82">Yes</text>
    <text x="242" y="108">No</text>
  </ChartSvg>
);

const DepartmentBars = () => (
  <ChartSvg viewBox="0 0 655 223">
    {['0.0', '0.1', '0.2'].map((t, i) => (
      <g key={t}><line x1={169 + i * 170} x2={169 + i * 170} y1="17" y2="190" {...dotted} /><text x={169 + i * 170} y="205" textAnchor="middle">{t}</text></g>
    ))}
    {departments.map(([name, v, t], i) => (
      <g key={name}>
        <rect x="169" y={32 + i * 49} width={v * 1700} height="38" fill={TEAL} />
        <text x="160" y={56 + i * 49} textAnchor="end">{name}</text>
        <text x={177 + v * 1700} y={55 + i * 49}>{t}</text>
      </g>
    ))}
  </ChartSvg>
);

const TenureLine = () => {
  const x = v => 47.5 + v * 14.4;
  const y = v => 179.5 - v * 165.5;
  return (
    <ChartSvg viewBox="0 0 643 223">
      {['1.0', '0.5', '0.0'].map((t, i) => (
        <g key={t}><text x="26" y={18 + i * 83} textAnchor="end">{t}</text><line x1="34" x2="632" y1={14 + i * 83} y2={14 + i * 83} {...dotted} /></g>
      ))}
      {[0, 10, 20, 30, 40].map(v => (
        <g key={v}><line x1={x(v)} x2={x(v)} y1="14" y2="179" {...dotted} /><text x={x(v)} y="196" textAnchor="middle">{v}</text></g>
      ))}
      <polyline points={tenure.map(([a, b]) => `${x(a)},${y(b)}`).join(' ')} fill="none" stroke={TEAL} strokeWidth="3" strokeLinejoin="round" />
      {tenureLabels.map(([v, t, ty]) => <text key={t} x={x(v)} y={ty} textAnchor="middle">{t}</text>)}
      <text x={x(20)} y="212" textAnchor="middle" fontSize="11" fill="#252423">YearsAtCompany</text>
    </ChartSvg>
  );
};

const Chevrons = () => (
  <svg width="14" height="14" viewBox="0 0 14 14" fill="none" stroke={K} strokeWidth="1.200"><path d="M1 1l6 6-6 6M7 1l6 6-6 6" /></svg>
);

const SearchIcon = ({ flip }) => (
  <svg width="15" height="15" viewBox="0 0 15 15" fill="none" stroke={K} strokeWidth="1.200">
    {flip ? <><circle cx="6" cy="6" r="5" /><path d="M9.500 9.500l5 5" /></> : <><circle cx="9.500" cy="5.500" r="4.800" /><path d="M6 9L.5 14.500" /></>}
  </svg>
);

const kpis = [
  ['Average Monthly...', '6.50K', 52],
  ['Attrition Count', '237', 52],
  ['Total Employees', '1K', 52],
  ['Attrition Rate %', '16.12%', 44],
];

export default function App() {
  const [crossReport, setCrossReport] = useState(false);
  const [keepFilters, setKeepFilters] = useState(true);

  return (
    <Shell>
      <GlobalStyle />
      <Ribbon>
        <TabBar>
          {['File', 'Home', 'Insert', 'Modeling', 'View', 'Optimize', 'Help'].map(t => (
            <Tab key={t} $active={t === 'Home'} $wide={t === 'File'}>{t}</Tab>
          ))}
          <ShareButton>
            <svg width="15" height="14" viewBox="0 0 15 14" fill="none" stroke="#fff" strokeWidth="1.200"><path d="M6 2H2.500Q1 2 1 3.500v8Q1 13 2.500 13h8q1.500 0 1.500-1.500V10M9.500 1L14 5 9.500 9V6.500Q6 6.500 4.500 9.500 5 4 9.500 3.500z" /></svg>
            Share
            <svg width="9" height="6" viewBox="0 0 9 6" fill="none" stroke="#fff" strokeWidth="1.300"><path d="M1 1l3.500 3.500L8 1" /></svg>
          </ShareButton>
        </TabBar>
        <Groups>
          <Group $left={4} $right={11}>
            <GroupItems>
              <RibbonItem $width={48} disabled><RibbonIcon name="paste" />Paste</RibbonItem>
              <ClipColumn>
                <ClipItem disabled>
                  <svg width="16" height="16" viewBox="0 0 16 16" fill="none" stroke="#a19f9d"><path d="M5 0l5 11M11 0L6 11" /><rect x="3.500" y="11.500" width="3" height="4" stroke="#9dcdf0" /><rect x="9.500" y="11.500" width="3" height="4" stroke="#9dcdf0" /></svg>
                  Cut
                </ClipItem>
                <ClipItem disabled>
                  <svg width="16" height="16" viewBox="0 0 16 16" fill="none" stroke="#a19f9d"><path d="M6 13.500H.5V.5h7l2 2" /><path d="M6.500 3.500h5l4 4v8h-9zM11.500 3.500v4h4M9 10.500h4M9 12.500h4" /></svg>
                  Copy
                </ClipItem>
                <ClipItem disabled>
                  <svg width="16" height="16" viewBox="0 0 16 16" fill="none" stroke="#a19f9d"><path d="M1 7l6-2 5 5-4 5.500z" fill="#fbe3cf" stroke="#eebf9c" /><path d="M5 5l7 7M9 7l4-6 2 2-4 6" /></svg>
                  Format painter
                </ClipItem>
              </ClipColumn>
            </GroupItems>
            <GroupLabel>Clipboard</GroupLabel>
          </Group>
          {ribbonGroups.map(g => (
            <Group key={g.label} $left={g.left} $right={g.right}>
              <GroupItems>
                {g.items.map(([icon, top, bottom, width, caret, off]) => (
                  <RibbonItem key={icon} $width={width} disabled={off}>
                    <RibbonIcon name={icon} />
                    <span>{top}<br />{bottom}{caret && <Caret color={off ? '#c8c6c4' : K} />}</span>
                  </RibbonItem>
                ))}
              </GroupItems>
              <GroupLabel>{g.label}</GroupLabel>
            </Group>
          ))}
          <Collapse aria-label="Collapse the ribbon">
            <svg width="10" height="6" viewBox="0 0 10 6" fill="none" stroke={K} strokeWidth="1.500"><path d="M1 5l4-4 4 4" /></svg>
          </Collapse>
        </Groups>
      </Ribbon>

      <Body>
        <Rail>
          <RailButton $active aria-label="Report view">
            <svg width="14" height="15" viewBox="0 0 14 15"><path d="M0 0l8 8V5h2v5V1h2v12h1.500v1.500H0z" fill="#111a2b" /></svg>
          </RailButton>
          <RailButton aria-label="Table view">
            <svg width="16" height="14" viewBox="0 0 16 14"><rect width="16" height="14" fill="#605e5c" /><path d="M0 4.500h16M0 9.500h16M5.500 4v10M10.500 4v10" stroke="#6f6d6b" /></svg>
          </RailButton>
          <RailButton aria-label="Model view">
            <svg width="18" height="18" viewBox="0 0 18 18" fill="#605e5c"><rect y="5" width="7" height="8" /><rect x="10" width="8" height="7" /><rect x="10" y="10" width="8" height="8" /><path d="M3 6V3h7M3 12v3h7" fill="none" stroke="#605e5c" strokeWidth="1.500" /></svg>
          </RailButton>
          {['DAX', 'TMDL'].map(t => (
            <RailButton key={t} aria-label={t + ' view'}>
              <svg width="20" height="18" viewBox="0 0 20 18" fill="none" stroke="#605e5c">
                <path d="M5.500 9V1.500h5l4 4V9M10.500 1.500v4h4M16.500 7v8" />
                <text x="9" y="17" textAnchor="middle" fontSize="7" fontWeight="600" fill="#605e5c" stroke="none">{t}</text>
              </svg>
            </RailButton>
          ))}
        </Rail>

        <Center>
          <Notice>
            <svg width="16" height="16" viewBox="0 0 16 16"><circle cx="8" cy="8" r="8" fill="#605e5c" /><path d="M8 7v5M8 4v1.500" stroke="#f3f3f3" strokeWidth="1.500" /></svg>
            Auto recovery contains some recovered files that haven't been opened.
            <NoticeAction>View recovered files</NoticeAction>
            <CloseButton aria-label="Dismiss">
              <svg width="11" height="11" viewBox="0 0 11 11" stroke={K}><path d="M.5 .5l10 10M10.500 .5l-10 10" /></svg>
            </CloseButton>
          </Notice>

          <Workspace>
            <Canvas>
              <ReportPage>
                <TitleCard><ReportTitle>Employee Attrition &amp; Turnover Analysis</ReportTitle></TitleCard>

                <CardRow $top={10} $columns="206fr 206fr 219fr 198fr 435fr">
                  {kpis.map(([label, value, size]) => (
                    <Card key={label} $height={128}>
                      <Kpi><KpiLabel>{label}</KpiLabel><KpiValue $size={size}>{value}</KpiValue></Kpi>
                    </Card>
                  ))}
                  <Card $height={115} $pad={7}>
                    <SlicerHead>
                      MaritalStatus
                      <svg width="13" height="8" viewBox="0 0 13 8" fill="none" stroke="#605e5c"><path d="M.5 1l6 6 6-6" /></svg>
                    </SlicerHead>
                    <SlicerTiles>
                      {['Divorced', 'Married', 'Single'].map(t => <SlicerTile key={t}>{t}</SlicerTile>)}
                    </SlicerTiles>
                  </Card>
                </CardRow>

                <CardRow $top={14} $columns="657fr 311fr 322fr">
                  <Card $height={198} $pad={5}>
                    <ChartTitle>Attrition Count by JobRole</ChartTitle>
                    <TreeMap>
                      <Tile $color="#9ad5c4">Laboratory Technician<TileCount>62</TileCount></Tile>
                      <Tile $color="#f68d8d">Sales Executive<TileCount>57</TileCount></Tile>
                      <Tile $color="#efc898">Research Scientist<TileCount>47</TileCount></Tile>
                      <TreeColumn $rows="110fr 40fr">
                        <Tile $color="#5081f0">Sales Representa...<TileCount>33</TileCount></Tile>
                        <Tile $color="#ccb0fa">Human Resources</Tile>
                      </TreeColumn>
                      <TreeColumn $rows="58fr 81fr 11fr">
                        <Tile $color="#f9b1b1">Manufa...<TileCount>10</TileCount></Tile>
                        <TreeSplit>
                          <Tile $color="#6fbeb8">Hea...<TileCount>9</TileCount></Tile>
                          <Tile $color="#f9b1b1" />
                        </TreeSplit>
                        <Tile $color="#9dc0f3" />
                      </TreeColumn>
                    </TreeMap>
                  </Card>
                  <Card $height={198} $pad={5}>
                    <ChartTitle>Count of Department by OverTime</ChartTitle>
                    <OvertimeBars />
                  </Card>
                  <Card $height={198} $pad={5}>
                    <ChartTitle>Attrition Rate % by OverTime</ChartTitle>
                    <OvertimeDonut />
                  </Card>
                </CardRow>

                <CardRow $top={10} $columns="657fr 645fr">
                  <Card $height={255} $pad={4}>
                    <ChartTitle>Attrition Rate % by Department</ChartTitle>
                    <DepartmentBars />
                  </Card>
                  <Card $height={255} $pad={4}>
                    <ChartTitle>Attrition Rate % by YearsAtCompany</ChartTitle>
                    <TenureLine />
                  </Card>
                </CardRow>
              </ReportPage>
            </Canvas>

            <FilterPane>
              <FilterSearch><SearchIcon /><PlainInput type="search" aria-label="Search filters" placeholder="Search" $ink="#252423" /></FilterSearch>
              <Rule $color="#a19f9d" />
              <FilterBlock $top={17}>
                <FilterHead>Filters on this page<Dots aria-label="Page filter options"><i /></Dots></FilterHead>
                <FilterDrop>Add data fields here</FilterDrop>
              </FilterBlock>
              <FilterBlock $top={27}>
                <FilterHead>Filters on all pages<Dots aria-label="All pages filter options"><i /></Dots></FilterHead>
                <FilterDrop>Add data fields here</FilterDrop>
              </FilterBlock>
            </FilterPane>
          </Workspace>

          <PageTabs>
            <ViewButton $left={10} $active aria-label="Desktop layout">
              <svg width="20" height="16" viewBox="0 0 20 16" fill="none" stroke="#484644" strokeWidth="1.500"><path d="M1 2h18v10.500H1zM10 12.500v2M6 15h8" /></svg>
            </ViewButton>
            <ViewButton $left={20} aria-label="Mobile layout">
              <svg width="13" height="21" viewBox="0 0 13 21" fill="none" stroke="#484644" strokeWidth="1.300"><rect x="1" y="1" width="11" height="19" rx="1" /><path d="M5.500 17h2" /></svg>
            </ViewButton>
            <Arrows>
              <svg width="5" height="8" viewBox="0 0 5 8"><path d="M5 0v8L0 4z" fill="#c8c6c4" /></svg>
              <svg width="5" height="8" viewBox="0 0 5 8"><path d="M0 0v8l5-4z" fill="#c8c6c4" /></svg>
            </Arrows>
            <PageTab>Page 1</PageTab>
            <AddPage aria-label="New page">
              <svg width="12" height="12" viewBox="0 0 12 12" stroke="#fff" strokeWidth="2.500"><path d="M6 .5v11M.5 6h11" /></svg>
            </AddPage>
          </PageTabs>
        </Center>

        <SidePane $width={182}>
          <PaneHead><h2>Visualizations</h2><button aria-label="Collapse visualizations"><Chevrons /></button></PaneHead>
          <SubHead>Build visual</SubHead>
          <BuildTabs>
            <BuildTab $active aria-label="Build visual">
              <svg width="24" height="26" viewBox="0 0 24 26" fill={GREEN} stroke={K}><path d="M0 1.500h19" /><g strokeDasharray="2 1"><rect x=".5" y="6.500" width="23" height="7" /><rect x=".5" y="17.500" width="23" height="7" /></g></svg>
            </BuildTab>
            <BuildTab aria-label="Format visual">
              <svg width="24" height="25" viewBox="0 0 24 25" fill="none" stroke={K} strokeWidth="1.300"><path d="M6 24H1V1h10l6 6v2M11 1v6h6" /><path d="M23 9q-6 2-10 9l2 2q6-4 8-11zM13 18q-3 0-3 3 0 2-3 2 7 3 8-3z" /></svg>
            </BuildTab>
          </BuildTabs>
          <Notch>
            <svg width="16" height="9" viewBox="0 0 16 9" fill="none" stroke="#8a8886"><path d="M0 8.500L8 1l8 7.500" /></svg>
          </Notch>
          <VisualGrid>
            {Object.keys(visuals).map(name => (
              <button key={name} aria-label={name}>
                <svg width="18" height="18" viewBox="0 0 18 18" fill="none" overflow="visible">{visuals[name]}</svg>
              </button>
            ))}
          </VisualGrid>
          <MoreVisuals aria-label="More visuals"><i /></MoreVisuals>
          <Rule />
          <FieldLabel>Values</FieldLabel>
          <FieldDrop $height={29} $indent={10}>Add data fields here</FieldDrop>
          <FieldLabel $strong>Drill through</FieldLabel>
          <Switches>
            <SwitchRow>
              <span id="cross">Cross-report</span>
              <Switch role="switch" aria-labelledby="cross" aria-checked={crossReport} $on={crossReport} onClick={() => setCrossReport(!crossReport)}>{crossReport ? 'On' : 'Off'}</Switch>
            </SwitchRow>
            <SwitchRow>
              <span id="keep">Keep all filters</span>
              <Switch role="switch" aria-labelledby="keep" aria-checked={keepFilters} $on={keepFilters} onClick={() => setKeepFilters(!keepFilters)}>{keepFilters ? 'On' : 'Off'}</Switch>
            </SwitchRow>
          </Switches>
          <FieldDrop $height={27} $indent={8}>Add drill-through fields here</FieldDrop>
        </SidePane>

        <SidePane $width={181}>
          <PaneHead><h2>Data</h2><button aria-label="Collapse data"><Chevrons /></button></PaneHead>
          <DataSearch><SearchIcon flip /><PlainInput type="search" aria-label="Search data" placeholder="Search" $ink="#757371" /></DataSearch>
          {['HR', 'Table'].map(t => (
            <TreeRow key={t}>
              <svg width="7" height="12" viewBox="0 0 7 12" fill="none" stroke="#605e5c"><path d="M1 .5L6.500 6 1 11.500" /></svg>
              <svg width="13" height="13" viewBox="0 0 13 13" fill="none" stroke={K}><rect x=".5" y=".5" width="12" height="12" rx="2" /><path d="M.5 4.500h12M.5 8.500h12M4.500 .5v12M8.500 .5v12" /></svg>
              {t}
            </TreeRow>
          ))}
        </SidePane>
      </Body>

      <StatusBar>
        Page 1 of 1
        <ZoomTools>
          <ZoomStep aria-label="Zoom out">-</ZoomStep>
          <ZoomRange type="range" aria-label="Zoom" min="10" max="200" defaultValue="106" />
          <ZoomStep aria-label="Zoom in">+</ZoomStep>
          <ZoomValue>104%</ZoomValue>
          <svg width="16" height="12" viewBox="0 0 16 12" fill="none" stroke="#605e5c"><rect x=".5" y=".5" width="15" height="11" /><path d="M3 4.500v-2h2M11 2.500h2v2M13 7.500v2h-2M5 9.500H3v-2" /></svg>
        </ZoomTools>
        <Update href="#update">Update available (click to download)</Update>
      </StatusBar>

      <Watermark lang="ar">مستقل<span lang="en">mostaql.com</span></Watermark>
    </Shell>
  );
}
